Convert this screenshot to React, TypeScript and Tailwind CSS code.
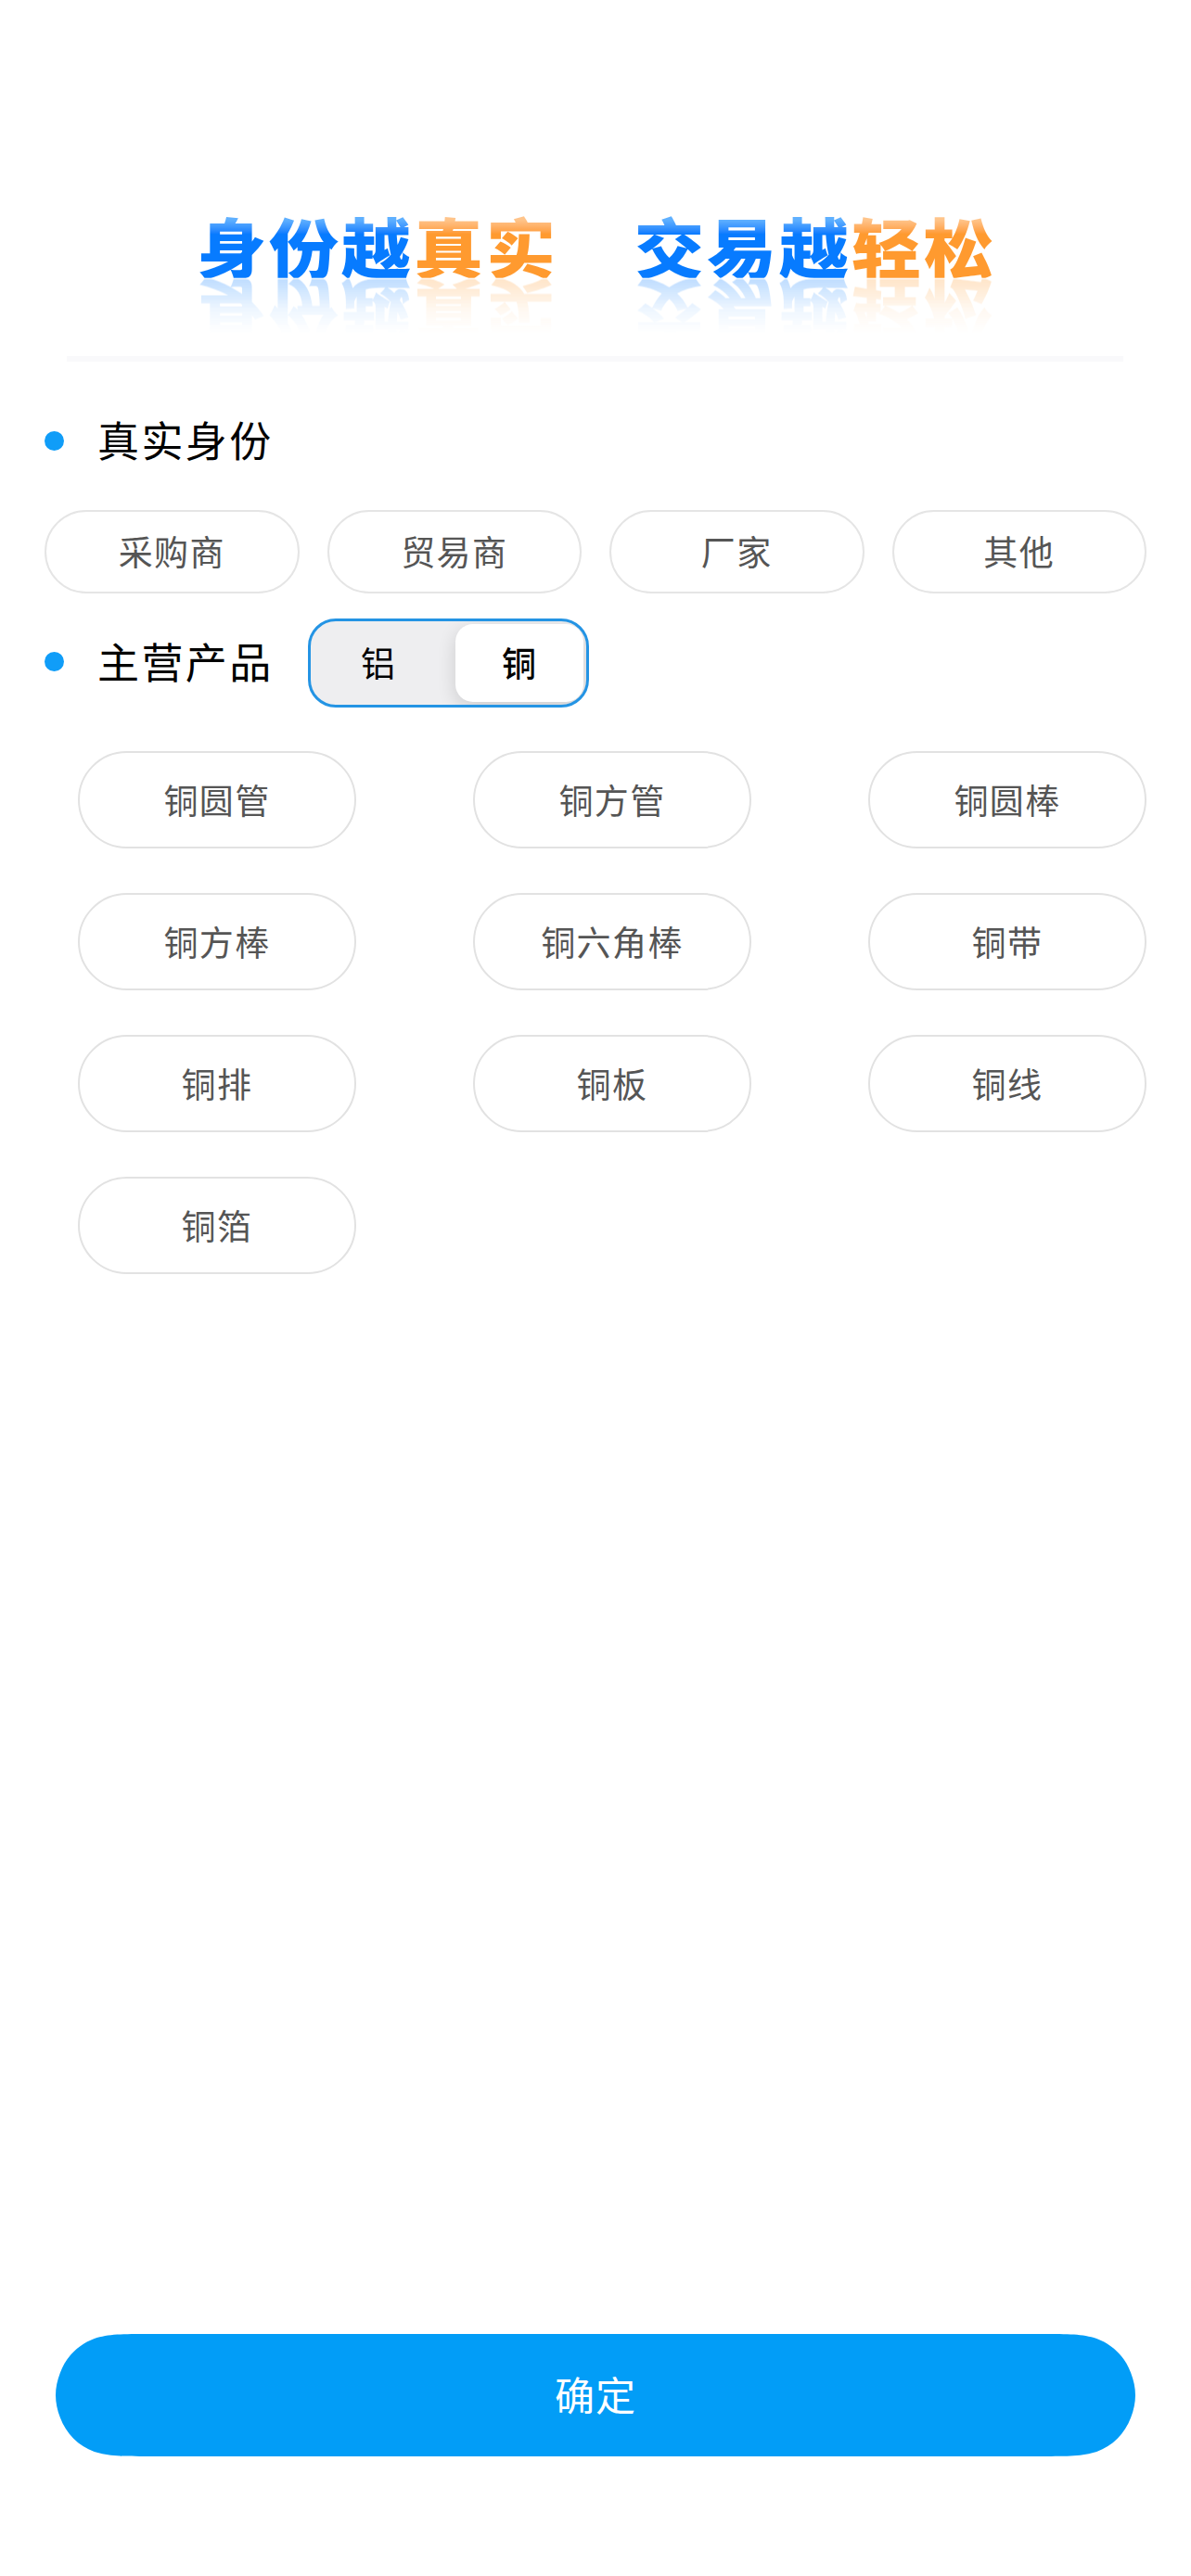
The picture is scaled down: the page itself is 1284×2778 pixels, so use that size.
import { useState } from "react";
import clsx from "clsx";

const identities = ["采购商", "贸易商", "厂家", "其他"];

const metals = ["铝", "铜"];

const products = [
  "铜圆管", "铜方管", "铜圆棒",
  "铜方棒", "铜六角棒", "铜带",
  "铜排", "铜板", "铜线",
  "铜箔",
];

// Glossy slogan with a faded reflection below it
const Slogan = ({ blue, orange }: { blue: string; orange: string }) => (
  <h1 className="w-[390px] h-[74px] flex scale-y-94 text-[75px] leading-[74px] font-black tracking-[3px] whitespace-nowrap [-webkit-box-reflect:below_1px_linear-gradient(transparent_15%,rgba(0,0,0,0.06)_50%,rgba(0,0,0,0.26))]">
    <span className="bg-linear-to-b from-[#5fb0ff] from-10% to-[#077bff] to-32% bg-clip-text text-transparent">{blue}</span>
    <span className="bg-linear-to-b from-[#ffc48a] from-10% to-[#ff9a2f] to-32% bg-clip-text text-transparent">{orange}</span>
  </h1>
);

const SectionTitle = ({ children }: { children: string }) => (
  <div className="flex items-center">
    <span className="w-[21px] h-[21px] rounded-full bg-[#109df8]"></span>
    <h2 className="ml-[36px] pb-[3px] text-[45px] leading-[57px] tracking-[2.4px] text-black">{children}</h2>
  </div>
);

const App = () => {
  const [metal, setMetal] = useState("铜");

  return (
    <div className="h-[2778px] w-[1284px] flex flex-col bg-white font-['Noto_Sans_CJK_SC',sans-serif] overflow-hidden">
      {/* Banner */}
      <div className="ml-[72px] mr-[73px] h-[390px] pt-[228px] pl-[140px] flex gap-[82px] border-b-[6px] border-[#f9f9fb]">
        <Slogan blue="身份越" orange="真实" />
        <Slogan blue="交易越" orange="轻松" />
      </div>

      {/* Identity */}
      <div className="mt-[55px] pl-12">
        <SectionTitle>真实身份</SectionTitle>
      </div>
      <div className="mt-[45px] px-12 grid grid-cols-4 gap-[30px]">
        {identities.map((name) => (
          <button
            key={name}
            className="h-[90px] pb-[3px] rounded-full border-2 border-[#e5e5e5] text-[37px] leading-[50px] tracking-[1.4px] text-[#555]"
          >
            {name}
          </button>
        ))}
      </div>

      {/* Main products */}
      <div className="mt-[27px] pl-12 flex items-center">
        <div className="-mt-[3px]">
          <SectionTitle>主营产品</SectionTitle>
        </div>
        <div className="ml-[37px] w-[303px] h-24 p-[3px] flex rounded-[30px] border-3 border-[#2494e4] bg-[#eeeef0] overflow-hidden">
          {metals.map((name) => (
            <button
              key={name}
              onClick={() => setMetal(name)}
              className={clsx(
                "pb-[2px] text-[37px] leading-[50px] text-black",
                metal === name
                  ? "w-[138px] rounded-[19px] bg-white font-medium shadow-[0_6px_20px_rgba(0,0,0,0.14)]"
                  : "w-[153px] pr-[13px]"
              )}
            >
              {name}
            </button>
          ))}
        </div>
      </div>
      <div className="mt-[47px] pl-[84px] pr-12 grid grid-cols-3 gap-x-[126px] gap-y-12">
        {products.map((name) => (
          <button
            key={name}
            className="h-[105px] pb-[2px] rounded-full border-2 border-[#e2e2e2] text-[37px] leading-[50px] tracking-[1.4px] text-[#555]"
          >
            {name}
          </button>
        ))}
      </div>

      {/* Submit */}
      <button className="relative mt-auto mb-[129px] mx-[60px] h-[132px] pb-[4px] shrink-0 text-[43px] leading-[60px] tracking-[1px] text-white">
        <svg className="absolute inset-0" width="1164" height="132" viewBox="0 0 1164 132" fill="#029df7">
          <path d="M101 0H1063C1092 0 1107 0 1122.3 4.9C1139.4 11.2 1152.8 24.6 1159.1 41.7C1162.3 50 1164 58 1164 66C1164 74 1162.3 82 1159.1 90.3C1152.8 107.4 1139.4 120.8 1122.3 127.1C1107 132 1092 132 1063 132H101C72 132 57 132 41.7 127.1C24.6 120.8 11.2 107.4 4.9 90.3C1.7 82 0 74 0 66C0 58 1.7 50 4.9 41.7C11.2 24.6 24.6 11.2 41.7 4.9C57 0 72 0 101 0Z" />
        </svg>
        <span className="relative">确定</span>
      </button>
    </div>
  );
};

export default App;
